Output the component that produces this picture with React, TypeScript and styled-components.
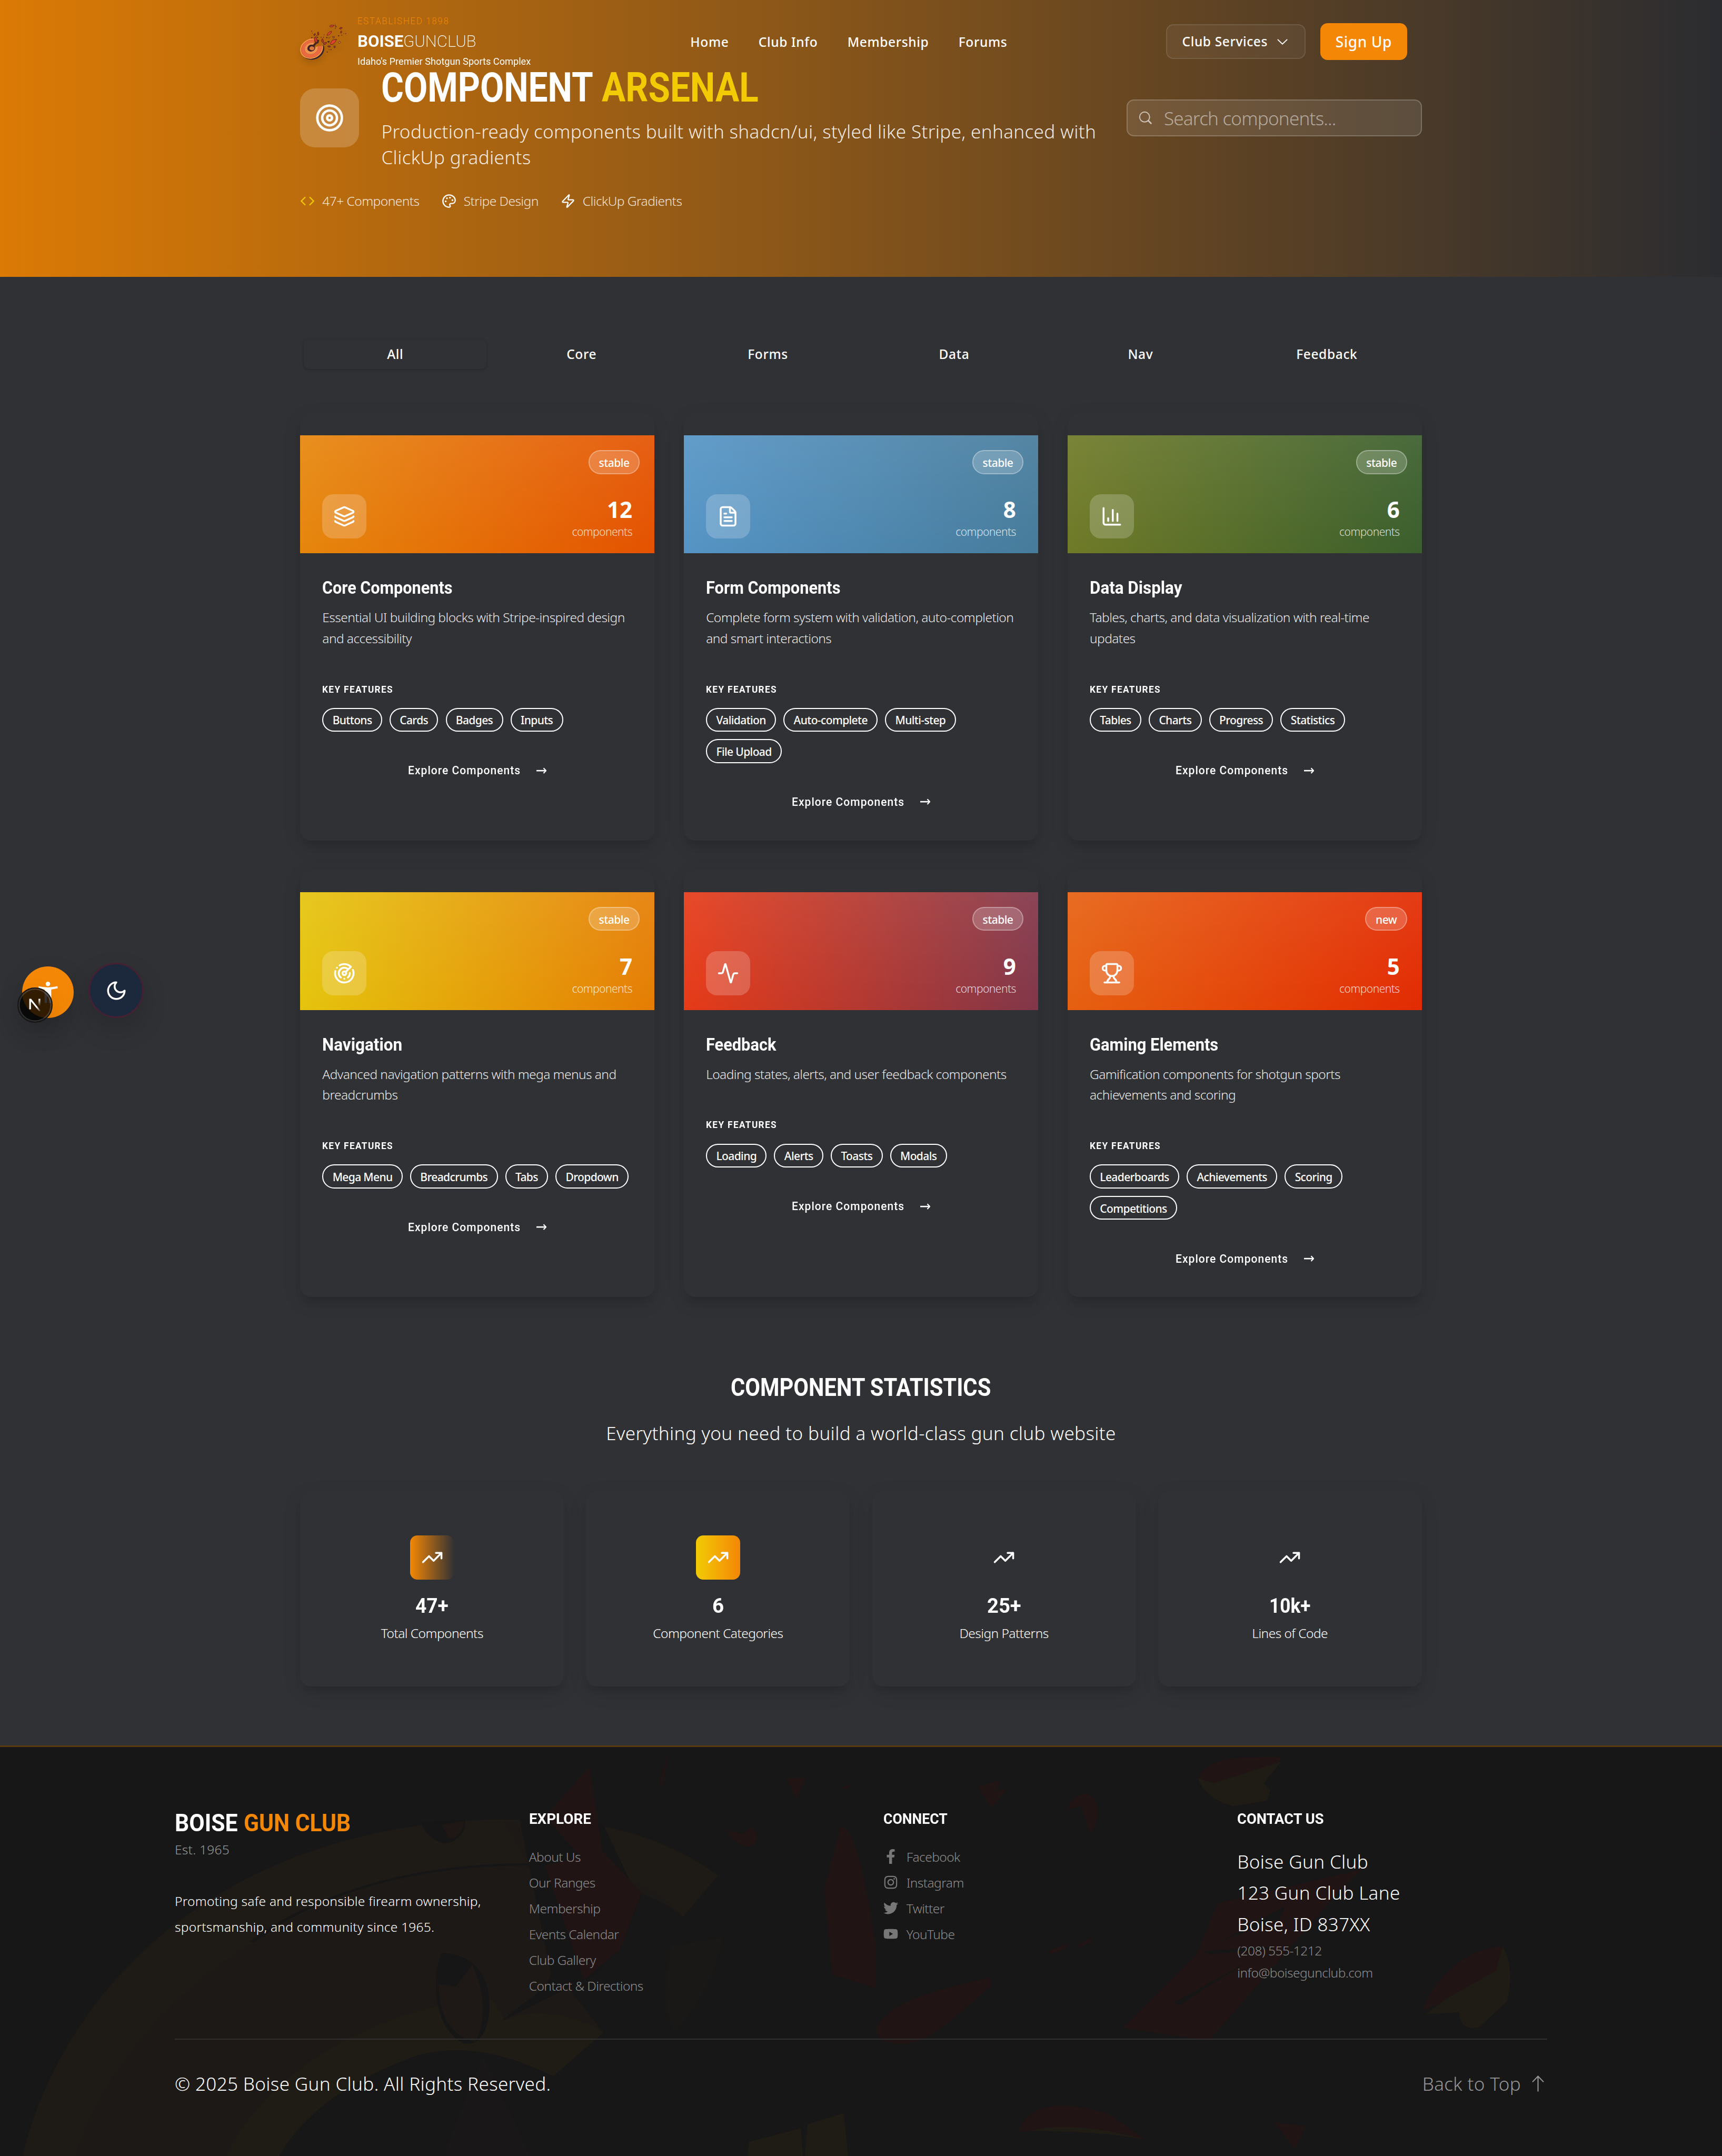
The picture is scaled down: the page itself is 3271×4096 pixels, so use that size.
import React, { useLayoutEffect, useRef, useState } from "react";
import styled, { createGlobalStyle } from "styled-components";
import {
  Activity,
  ChartColumn,
  Code,
  FileText,
  Layers,
  Palette,
  Radar,
  Target,
  TrendingUp,
  Trophy,
  Zap,
} from "lucide-react";
import { FaFacebookF, FaInstagram, FaTwitter, FaYoutube } from "react-icons/fa";

/* Design pixels to rem: the root font size carries the page scale. */
const u = (n: number) => `${n / 16}rem`;

const color = {
  page: "#303135",
  footer: "#171717",
  orange: "#f48705",
  yellow: "#f2cb05",
  muted: "#8c8c8c",
};

const Global = createGlobalStyle`
  html { font-size: 28.032px; }
  *, *::before, *::after { box-sizing: border-box; }
  body {
    margin: 0;
    background: ${color.page};
    color: #fff;
    font-family: "Noto Sans", "Open Sans", sans-serif;
    font-weight: 300;
    -webkit-font-smoothing: antialiased;
  }
  h1, h2, h3, h4, p, ul { margin: 0; padding: 0; }
  ul { list-style: none; }
  button { border: 0; background: none; color: inherit; font: inherit; padding: 0; }
  a { color: inherit; text-decoration: none; }
  svg { display: block; flex: none; }
`;

/* ---------- Condensed display text ---------- */

const FitBox = styled.span<{ $w: number }>`
  display: inline-block;
  width: ${(p) => u(p.$w)};
  vertical-align: top;
  white-space: nowrap;
`;
const FitInner = styled.span`
  display: inline-block;
  transform-origin: 0 50%;
`;

/* Squeezes its text to exactly the given width. */
function Fit({ w, children }: { w: number; children: React.ReactNode }) {
  const ref = useRef<HTMLSpanElement>(null);
  const [k, setK] = useState(1);
  useLayoutEffect(() => {
    const el = ref.current;
    if (!el || !el.parentElement) return;
    const natural = el.offsetWidth;
    if (natural) setK(el.parentElement.getBoundingClientRect().width / natural);
  }, [w]);
  return (
    <FitBox $w={w}>
      <FitInner ref={ref} style={{ transform: `scaleX(${k})` }}>
        {children}
      </FitInner>
    </FitBox>
  );
}

/* ---------- Page ---------- */

const Page = styled.div`
  position: relative;
  width: 100%;
  height: 4096px;
  overflow: hidden;
  display: flex;
  flex-direction: column;
`;

/* ---------- Navigation ---------- */

const NavBar = styled.header`
  position: absolute;
  inset: 0 0 auto 0;
  z-index: 5;
  height: ${u(90)};
  padding: 0 ${u(341.5)} 0 ${u(325.5)};
  display: grid;
  grid-template-columns: ${u(423)} 1fr auto;
  align-items: center;
`;
const Brand = styled.div`
  display: flex;
  align-items: center;
  gap: ${u(12)};
`;
const BrandText = styled.div`
  display: flex;
  flex-direction: column;
  font-family: Roboto, sans-serif;
`;
const Established = styled.span`
  font-size: ${u(10.8)};
  line-height: ${u(16)};
  letter-spacing: 0.1em;
  font-weight: 300;
  color: ${color.orange};
`;
const BrandName = styled.span`
  font-size: ${u(18.3)};
  line-height: ${u(28)};
  font-weight: 200;
  b { font-weight: 700; }
`;
const Tagline = styled.span`
  font-size: ${u(10.9)};
  line-height: ${u(16)};
  font-weight: 400;
`;
const NavLinks = styled.nav`
  display: flex;
  gap: ${u(32.2)};
  font-size: ${u(14)};
  font-weight: 500;
  letter-spacing: 0.025em;
  line-height: ${u(20)};
  padding-top: ${u(0.6)};
`;
const NavActions = styled.div`
  display: flex;
  align-items: center;
  gap: ${u(16)};
`;
const ServicesButton = styled.button`
  height: ${u(38)};
  width: ${u(151)};
  padding: 0 ${u(16)};
  display: flex;
  align-items: center;
  justify-content: space-between;
  border: 2px solid rgba(255, 255, 255, 0.1);
  border-radius: ${u(8)};
  background: rgba(255, 255, 255, 0.05);
  font-size: ${u(14)};
  font-weight: 500;
  letter-spacing: 0.025em;
  svg { width: ${u(16)}; height: ${u(16)}; }
`;
const SignUpButton = styled.button`
  height: ${u(40)};
  width: ${u(94)};
  border-radius: ${u(8)};
  background: ${color.orange};
  font-size: ${u(16)};
  font-weight: 500;
  letter-spacing: 0.02em;
`;
const LogoSvg = styled.svg`
  width: ${u(50)};
  height: ${u(40)};
  overflow: visible;
  filter: drop-shadow(0 ${u(4)} ${u(3)} rgba(0, 0, 0, 0.12));
`;

/* ---------- Hero ---------- */

const Hero = styled.section`
  flex: none;
  height: ${u(300)};
  padding: ${u(72)} ${u(325.5)} 0;
  background: linear-gradient(to right, #db7a05, #2b2c30);
`;
const HeroRow = styled.div`
  display: flex;
  align-items: center;
`;
const HeroIcon = styled.div`
  flex: none;
  width: ${u(64)};
  height: ${u(64)};
  margin-right: ${u(24)};
  display: grid;
  place-items: center;
  border-radius: ${u(16)};
  background: rgba(255, 255, 255, 0.2);
  svg { width: ${u(32)}; height: ${u(32)}; }
`;
const HeroText = styled.div`
  flex: 1;
`;
const HeroTitle = styled.h1`
  margin-bottom: ${u(8.6)};
  height: ${u(47.4)};
  font: 700 ${u(43.9)} / ${u(47)} Roboto, sans-serif;
  white-space: nowrap;
`;
const Gold = styled.span`
  margin-left: ${u(9)};
  color: ${color.yellow};
`;
const HeroLead = styled.p`
  height: ${u(56)};
  padding-top: ${u(0.6)};
  font-size: ${u(20)};
  line-height: ${u(28)};
  letter-spacing: 0.01em;
  white-space: nowrap;
  color: rgba(255, 255, 255, 0.9);
`;
const SearchField = styled.label`
  flex: none;
  width: ${u(320)};
  height: ${u(40)};
  padding-left: ${u(11.3)};
  display: flex;
  align-items: center;
  gap: ${u(12)};
  border: 2px solid rgba(255, 255, 255, 0.2);
  border-radius: ${u(8)};
  background: rgba(255, 255, 255, 0.1);
  color: rgba(255, 255, 255, 0.5);
  font-size: ${u(20)};
  line-height: ${u(28)};
  letter-spacing: -0.0225em;
  svg { width: ${u(16)}; height: ${u(16)}; color: rgba(255, 255, 255, 0.65); }
`;
const Facts = styled.ul`
  margin-top: ${u(24)};
  display: flex;
  gap: ${u(24)};
`;
const Fact = styled.li<{ $icon?: string }>`
  display: flex;
  align-items: center;
  gap: ${u(8)};
  font-size: ${u(14)};
  line-height: ${u(20)};
  letter-spacing: -0.022em;
  color: rgba(255, 255, 255, 0.85);
  svg { width: ${u(16)}; height: ${u(16)}; color: ${(p) => p.$icon || "#fff"}; }
`;

/* ---------- Tabs ---------- */

const Main = styled.main`
  flex: none;
  padding: ${u(64)} ${u(325.5)};
`;
const TabList = styled.div`
  height: ${u(40)};
  padding: ${u(4)};
  display: grid;
  grid-template-columns: repeat(6, 1fr);
  gap: ${u(4)};
  margin-bottom: ${u(44)};
`;
const Tab = styled.button<{ $active: boolean }>`
  border-radius: ${u(6)};
  font-size: ${u(14)};
  line-height: ${u(20)};
  font-weight: 500;
  letter-spacing: 0.025em;
  box-shadow: ${(p) => (p.$active ? `0 ${u(1)} ${u(3)} rgba(0,0,0,.2)` : "none")};
`;

/* ---------- Category cards ---------- */

const cardShadow = `0 ${u(8)} ${u(10)} ${u(-4)} rgba(0,0,0,.12), 0 ${u(6)} ${u(22)} rgba(0,0,0,.08)`;

const CardGrid = styled.div`
  display: grid;
  grid-template-columns: repeat(3, 1fr);
  gap: ${u(32)};
`;
const Card = styled.article`
  height: ${u(463.3)};
  padding-top: ${u(24)};
  border-radius: ${u(12)};
  background: ${color.page};
  box-shadow: ${cardShadow};
`;
const Banner = styled.div<{ $from: string; $to: string }>`
  height: ${u(128)};
  padding: ${u(16)} ${u(16)} ${u(16)} ${u(24)};
  display: grid;
  grid-template-columns: ${u(48)} 1fr;
  grid-template-rows: ${u(26)} 1fr;
  background:
    linear-gradient(to bottom, rgba(255, 255, 255, 0.08), rgba(255, 255, 255, 0)),
    linear-gradient(to right, ${(p) => p.$from}, ${(p) => p.$to});
`;
const Status = styled.span`
  grid-column: 2;
  justify-self: end;
  height: ${u(26)};
  padding: ${u(1.2)} ${u(10)} 0;
  display: flex;
  align-items: center;
  border: 2px solid rgba(255, 255, 255, 0.3);
  border-radius: ${u(13)};
  background: rgba(255, 255, 255, 0.2);
  font-size: ${u(12)};
  line-height: ${u(16)};
  font-weight: 500;
  letter-spacing: -0.025em;
`;
const IconTile = styled.span`
  align-self: end;
  width: ${u(48)};
  height: ${u(48)};
  display: grid;
  place-items: center;
  border-radius: ${u(12)};
  background: rgba(255, 255, 255, 0.2);
  svg { width: ${u(24)}; height: ${u(24)}; }
`;
const Count = styled.div`
  align-self: end;
  height: ${u(47.3)};
  padding-right: ${u(8)};
  text-align: right;
`;
const CountNumber = styled.div`
  font-size: ${u(24)};
  line-height: ${u(32)};
  font-weight: 700;
`;
const CountLabel = styled.div`
  font-size: ${u(12)};
  line-height: ${u(16)};
  letter-spacing: -0.025em;
  color: rgba(255, 255, 255, 0.8);
`;
const CardBody = styled.div`
  padding: ${u(24)};
  display: flex;
  flex-direction: column;
`;
const CardTitle = styled.h3`
  font: 700 ${u(18.6)} / ${u(28)} Roboto, sans-serif;
`;
const CardText = styled.p`
  margin-top: ${u(6)};
  font-size: ${u(14)};
  line-height: ${u(22.75)};
  letter-spacing: -0.023em;
  white-space: nowrap;
  color: rgba(255, 255, 255, 0.92);
`;
const FeatureTitle = styled.h4`
  margin-top: ${u(36)};
  font: 700 ${u(11)} / ${u(16)} Roboto, sans-serif;
  letter-spacing: 0.08em;
`;
const Chips = styled.ul`
  margin-top: ${u(12)};
  display: flex;
  flex-wrap: wrap;
  gap: ${u(8)};
`;
const Chip = styled.li`
  height: ${u(26)};
  padding: ${u(1.2)} ${u(9.9)} 0;
  display: flex;
  align-items: center;
  border: 2px solid #fff;
  border-radius: ${u(13)};
  font-size: ${u(12)};
  line-height: ${u(16)};
  font-weight: 500;
  letter-spacing: -0.03em;
  white-space: nowrap;
`;
const ExploreButton = styled.button`
  margin-top: ${u(24)};
  height: ${u(36)};
  display: flex;
  align-items: center;
  justify-content: center;
  gap: ${u(17)};
  font: 500 ${u(12.8)} / ${u(20)} Roboto, sans-serif;
  letter-spacing: 0.05em;
  svg { width: ${u(11)}; height: ${u(7)}; }
`;

/* ---------- Statistics ---------- */

const StatsHeading = styled.h2`
  margin-top: ${u(80)};
  font: 700 ${u(27.4)} / ${u(36)} Roboto, sans-serif;
  text-align: center;
`;
const StatsLead = styled.p`
  margin: ${u(17.3)} 0 ${u(49.2)};
  font-size: ${u(20)};
  line-height: ${u(28)};
  letter-spacing: 0.01em;
  text-align: center;
`;
const StatGrid = styled.div`
  display: grid;
  grid-template-columns: repeat(4, 1fr);
  gap: ${u(24)};
`;
const StatCard = styled.div`
  height: ${u(211.7)};
  padding-top: ${u(48)};
  display: flex;
  flex-direction: column;
  align-items: center;
  border-radius: ${u(12)};
  background: ${color.page};
  box-shadow: ${cardShadow};
`;
const StatIcon = styled.div<{ $bg: string }>`
  width: ${u(48)};
  height: ${u(48)};
  margin-bottom: ${u(12.2)};
  display: grid;
  place-items: center;
  border-radius: ${u(8)};
  background: ${(p) => p.$bg};
  svg { width: ${u(24)}; height: ${u(24)}; }
`;
const StatValue = styled.div`
  margin-bottom: ${u(3.5)};
  font: 700 ${u(22.2)} / ${u(32)} Roboto, sans-serif;
`;
const StatLabel = styled.div`
  font-size: ${u(14)};
  line-height: ${u(20)};
  letter-spacing: -0.022em;
`;

/* ---------- Footer ---------- */

const Footer = styled.footer`
  position: relative;
  flex: 1;
  overflow: hidden;
  padding: ${u(64)} ${u(189.5)} 0;
  border-top: 3px solid #59390f;
  background: ${color.footer};
`;
const FooterArt = styled.svg`
  position: absolute;
  inset: 0;
  width: 100%;
  height: 100%;
`;
const FooterGrid = styled.div`
  position: relative;
  height: ${u(253.4)};
  display: grid;
  grid-template-columns: repeat(4, 1fr);
  gap: ${u(48)};
  align-items: start;
  border-bottom: 2px solid #303030;
`;
const FooterBrand = styled.h2`
  font: 700 ${u(26.8)} / ${u(36)} Roboto, sans-serif;
`;
const OrangeText = styled.span`
  margin-left: ${u(6.5)};
  color: ${color.orange};
`;
const Since = styled.p`
  margin-top: ${u(0.8)};
  font-size: ${u(14)};
  line-height: ${u(20)};
  letter-spacing: 0.01em;
  color: #9a9a9a;
`;
const Mission = styled.p`
  margin-top: ${u(32)};
  font-size: ${u(14)};
  line-height: ${u(28)};
  letter-spacing: 0.01em;
  white-space: nowrap;
`;
const FooterTitle = styled.h3`
  margin-bottom: ${u(16.8)};
  font: 700 ${u(16.2)} / ${u(28)} Roboto, sans-serif;
`;
const LinkList = styled.ul`
  display: flex;
  flex-direction: column;
  gap: ${u(8)};
`;
const LinkItem = styled.li`
  display: flex;
  align-items: center;
  gap: ${u(9.2)};
  font-size: ${u(14)};
  line-height: ${u(20)};
  letter-spacing: -0.023em;
  color: ${color.muted};
  svg { width: ${u(16)}; height: ${u(16)}; color: #777; }
`;
const Address = styled.p`
  margin-top: ${u(-1.8)};
  font-size: ${u(20)};
  line-height: ${u(34)};
  letter-spacing: 0.01em;
`;
const ContactLine = styled.p`
  font-size: ${u(14)};
  line-height: ${u(24)};
  letter-spacing: -0.022em;
  color: ${color.muted};
`;
const FooterBottom = styled.div`
  position: relative;
  padding-top: ${u(32.8)};
  display: flex;
  justify-content: space-between;
  font-size: ${u(20)};
  line-height: ${u(30)};
  letter-spacing: 0.01em;
`;
const BackToTop = styled.a`
  display: flex;
  align-items: center;
  gap: ${u(8.5)};
  color: #959595;
  svg { width: ${u(20)}; height: ${u(20)}; }
`;

/* ---------- Floating controls ---------- */

const Floating = styled.div<{ $x: number; $y: number; $d: number }>`
  position: absolute;
  z-index: 6;
  left: ${(p) => u(p.$x)};
  top: ${(p) => u(p.$y)};
  width: ${(p) => u(p.$d)};
  height: ${(p) => u(p.$d)};
  border-radius: 50%;
  display: grid;
  place-items: center;
`;
const AccessButton = styled(Floating)`
  background: ${color.orange};
  box-shadow: 0 ${u(12)} ${u(28)} rgba(0, 0, 0, 0.15);
  svg { width: ${u(24)}; height: ${u(28)}; }
`;
const ThemeButton = styled(Floating)`
  background: #1c293d;
  border: 3.5px solid #452033;
  box-shadow: 0 ${u(12)} ${u(28)} rgba(0, 0, 0, 0.15);
  svg { width: ${u(24)}; height: ${u(24)}; }
`;
const DevBadge = styled(Floating)`
  background: rgba(0, 0, 0, 0.8);
  border: 2px solid #171717;
  box-shadow: inset 0 0 0 2.5px rgba(255, 255, 255, 0.16), 0 ${u(12)} ${u(28)} rgba(0, 0, 0, 0.12);
  svg { width: ${u(13)}; height: ${u(14)}; }
`;

/* ---------- Drawings ---------- */

const shards: [string, string][] = [
  ["M225 109L235 103L256 104L247 113L230 115Z", "#e2432c"],
  ["M208 165L220 150L237 142L236 153L222 165L210 170Z", "#e8472f"],
  ["M229 222L244 200L271 195L262 212L246 227L233 229Z", "#e2432c"],
  ["M288 125L297 117L308 120L300 129Z", "#b5382b"],
  ["M295 152L300 140L306 146L300 156Z", "#c23a2b"],
  ["M174 195L180 190L187 212L182 218L174 210Z", "#c23a2b"],
  ["M184 223L196 215L208 217L198 228L186 229Z", "#b5382b"],
  ["M124 186L134 178L146 205L142 217L130 210Z", "#c93c2c"],
  ["M146 152L152 147L155 165L148 170Z", "#a43329"],
  ["M121 165L130 157L134 163L126 172Z", "#a43329"],
  ["M212 240L225 237L232 243L220 247Z", "#a43329"],
  ["M252 241L260 238L263 247L256 251Z", "#c23a2b"],
  ["M243 178L256 177L256 184L247 185Z", "#e98a3c"],
  ["M282 214L292 208L297 215L287 223Z", "#ee8a4a"],
  ["M211 209L224 207L220 217Z", "#4a2520"],
];
const specks: [number, number, number][] = [
  [109, 142, 3], [113, 155, 2.5], [110, 185, 4], [140, 172, 3], [146, 182, 4], [170, 182, 3],
  [186, 182, 3], [190, 166, 2.5], [207, 184, 4], [222, 186, 3], [230, 180, 2], [262, 103, 3],
  [266, 112, 4], [262, 123, 3], [260, 92, 1.5], [284, 172, 4], [304, 168, 3], [317, 158, 2.5],
  [330, 158, 3], [234, 262, 3.5], [210, 278, 3.5], [222, 262, 2.5], [252, 188, 2], [216, 232, 2],
];

function Logo() {
  return (
    <LogoSvg viewBox="33 90 300 240">
      <ellipse cx="116" cy="262" rx="76" ry="64" transform="rotate(-22 116 262)" fill="#34222c" />
      <ellipse cx="108" cy="256" rx="76" ry="64" transform="rotate(-22 108 256)" fill="#f79b4b" />
      <ellipse cx="107" cy="256" rx="68" ry="56" transform="rotate(-22 107 256)" fill="#ec6a3f" />
      <ellipse cx="108" cy="256" rx="68" ry="56" transform="rotate(-22 108 256)" fill="none" stroke="#b8502f" strokeWidth="2" />
      <ellipse cx="106" cy="254" rx="45" ry="38" transform="rotate(-22 106 254)" fill="#f0934e" stroke="#c05c33" strokeWidth="2" />
      <ellipse cx="106" cy="252" rx="26" ry="22" transform="rotate(-22 106 252)" fill="#3b2027" />
      <ellipse cx="110" cy="254" rx="16" ry="13" fill="#d97a3f" />
      <path d="M128 190L158 196L190 232L178 238L150 240L126 248L134 224L122 214Z" fill="#b8690d" />
      <path d="M132 196L158 200L152 220L140 224L128 240L116 246L120 226L132 216Z" fill="#4a2520" />
      {shards.map(([d, fill]) => (
        <path key={d} d={d} fill={fill} stroke="#4a1f1c" strokeWidth="3" />
      ))}
      {specks.map(([x, y, r]) => (
        <circle key={`${x}-${y}`} cx={x} cy={y} r={r} fill="#5a2218" />
      ))}
    </LogoSvg>
  );
}

function FooterArtwork() {
  const tan = "#1f1b15";
  const red = "#201514";
  const dark = "#161616";
  return (
    <FooterArt viewBox="0 0 3734 886" preserveAspectRatio="none">
      <g transform="scale(1.2117 .5842) translate(0 -51)">
        <path d="M40 1568C120 900 420 330 900 320C1080 320 1200 420 1285 527L1222 682C1200 640 1130 540 1050 600L1000 900L1080 1110L990 1272C880 1160 800 1160 740 1200C620 1290 540 1420 500 1568Z" fill="#1d1917" />
        <path d="M40 1568C120 900 420 330 900 320L945 484C560 470 220 1000 135 1568Z" fill="#1e1b16" />
        <path d="M1080 345C1180 390 1240 460 1285 527L1222 682C1200 620 1160 570 1127 545Z" fill="#1e1b16" />
        <path d="M450 775C560 600 740 480 955 487" fill="none" stroke={dark} strokeWidth="8" />
        <path d="M405 1568C480 1230 700 1000 880 985L905 1065C950 1010 1040 1050 1080 1110L990 1272C880 1160 800 1160 740 1200C620 1290 540 1420 500 1568Z" fill={tan} />
        <path d="M930 320L1080 340L1130 560L1148 600L1110 800L1060 900L900 1065C930 1000 990 950 985 880Z" fill={dark} />
        <path d="M1055 125L1078 440L1045 470L975 310Z" fill={red} />
        <path d="M975 490L1080 440L1148 590L1110 800L1045 915Z" fill={red} />
        <path d="M790 815C850 820 880 900 875 1040C870 1130 850 1160 830 1150C790 1110 775 1000 782 870Z" fill={dark} />
        <path d="M785 930L815 940L845 860C870 960 870 1080 850 1145C810 1120 785 1060 785 930Z" fill="#1e1916" />
        <path d="M755 330L832 322C835 380 810 410 795 408C775 400 755 360 755 330Z" fill={dark} />
        <path d="M790 340L830 325C830 370 815 390 805 392Z" fill="#1e1716" />
        <path d="M1200 790L1295 755C1280 900 1240 1050 1205 1105C1185 1030 1190 900 1200 790Z" fill="#191816" />
        <path d="M1408 166H1442L1425 245Z M1302 360L1330 375L1345 345C1362 380 1355 420 1338 420C1320 410 1306 390 1302 360Z" fill={red} />
        <path d="M1505 342C1530 360 1545 500 1568 800V945L1490 895L1475 580Z" fill={red} />
        <path d="M1340 1515L1433 1465L1437 1568H1338Z M1445 1450L1510 1408L1518 1568H1440Z" fill={tan} />
        <path d="M1180 180L1198 65L1185 200Z M1500 207L1523 187L1518 205Z" fill={red} />
        <path d="M808 1482L865 1200L950 1568H795Z" fill="#191717" />
      </g>
      <g transform="translate(1850 0) scale(1.2015 .5842) translate(0 -51)">
        <path d="M0 405L42 945L0 920Z" fill={red} />
        <path d="M622 165C640 90 690 86 773 88L765 125L650 185Z" fill={red} />
        <path d="M622 165L650 185L773 105L741 185L753 210L747 250L686 271C650 250 628 210 622 165Z" fill={tan} />
        <path d="M225 197L265 175L258 215L278 205L250 277Z M387 280C395 220 435 200 440 270C442 330 435 370 427 365L412 270Z" fill={red} />
        <path d="M918 505L875 590L642 1140L487 1093L620 820L658 630Z" fill={red} />
        <path d="M665 770L780 640L770 690L690 750Z M578 1000L710 850L640 940L590 1008Z M632 808L760 790L756 800L640 820Z" fill={dark} />
        <path d="M248 905V940C210 1000 170 1090 120 1140C80 1165 40 1150 42 1095C60 1000 150 950 248 905Z" fill={red} />
        <path d="M1172 790L1160 880L1070 990L1027 1030C1050 910 1100 800 1172 790Z" fill={red} />
        <path d="M1172 790C1190 850 1188 930 1180 995L1130 1090C1110 1100 1096 1090 1093 1035L1033 1042L1070 985L1160 880Z" fill={tan} />
        <path d="M298 1478C320 1370 370 1360 460 1410L528 1508C440 1465 360 1470 298 1478Z" fill={red} />
        <path d="M320 1475C360 1450 440 1455 528 1508C460 1480 370 1475 320 1475Z" fill={tan} />
        <path d="M760 1443L817 1457L797 1542Z M352 810L382 780L388 795L360 818Z M402 790L432 755L430 775L408 795Z" fill={red} />
      </g>
    </FooterArt>
  );
}

const ChevronIcon = () => (
  <svg viewBox="0 0 15 15" fill="none" stroke="currentColor" strokeWidth="1">
    <path d="M2.6 5.3L7.5 10L12.4 5.3" />
  </svg>
);
const SearchIcon = () => (
  <svg viewBox="0 0 16 16" fill="none" stroke="currentColor" strokeWidth="1.1">
    <circle cx="7" cy="7" r="5.4" />
    <path d="M11 11L14.4 14.4" strokeWidth="1.5" />
  </svg>
);
const ArrowIcon = () => (
  <svg viewBox="0 0 11 7" fill="none" stroke="currentColor" strokeWidth="1.5">
    <path d="M0 3.5H10" />
    <path d="M7.7 0.7L10.3 3.5L7.7 6.3" strokeWidth="1.2" />
  </svg>
);
const UpIcon = () => (
  <svg viewBox="0 0 20 20" fill="none" stroke="currentColor" strokeWidth="1.2">
    <path d="M10 18.5V2.2M4 8.2L10 2L16 8.2" />
  </svg>
);
const PersonIcon = () => (
  <svg viewBox="0 0 24 28">
    <circle cx="12" cy="4.7" r="2.4" fill="#fff" />
    <path d="M1.8 7.2C8 8.8 16 8.8 22.3 7.2L22.6 9.4L15.6 10.8V25.4H13V18H11V25.4H8.4V10.8L1.6 9.4Z" fill="#fff" />
  </svg>
);
const MoonIcon = () => (
  <svg viewBox="0 0 24 24" fill="none" stroke="#fff" strokeWidth="2" strokeLinejoin="round">
    <path d="M12 3a6 6 0 0 0 9 9 9 9 0 1 1-9-9Z" />
  </svg>
);
const NextMark = () => (
  <svg viewBox="0 0 78 84" fill="none">
    <defs>
      <linearGradient id="stem" x1="0" y1="0" x2="0" y2="1">
        <stop offset="0" stopColor="#fff" />
        <stop offset="1" stopColor="#fff" stopOpacity="0" />
      </linearGradient>
      <linearGradient id="diag" gradientUnits="userSpaceOnUse" x1="50" y1="56" x2="74" y2="86">
        <stop offset="0" stopColor="#fff" />
        <stop offset="1" stopColor="#fff" stopOpacity="0" />
      </linearGradient>
    </defs>
    <path d="M2 70V2H14L76 80L67 84L13 19V70Z" fill="url(#diag)" />
    <rect x="62" y="2" width="12" height="46" fill="url(#stem)" />
  </svg>
);

/* ---------- Data ---------- */

const tabs = ["All", "Core", "Forms", "Data", "Nav", "Feedback"];

const cards = [
  {
    title: "Core Components", titleW: 141.5, count: 12, status: "stable", Icon: Layers,
    from: "#e6860c", to: "#e45200",
    text: ["Essential UI building blocks with Stripe-inspired design", "and accessibility"],
    chips: ["Buttons", "Cards", "Badges", "Inputs"],
  },
  {
    title: "Form Components", titleW: 146, count: 8, status: "stable", Icon: FileText,
    from: "#5594c5", to: "#467b9b",
    text: ["Complete form system with validation, auto-completion", "and smart interactions"],
    chips: ["Validation", "Auto-complete", "Multi-step", "File Upload"],
  },
  {
    title: "Data Display", titleW: 100, count: 6, status: "stable", Icon: ChartColumn,
    from: "#6f7a27", to: "#3a5e2c",
    text: ["Tables, charts, and data visualization with real-time", "updates"],
    chips: ["Tables", "Charts", "Progress", "Statistics"],
  },
  {
    title: "Navigation", titleW: 87, count: 7, status: "stable", Icon: Radar,
    from: "#e5c40d", to: "#e57d03",
    text: ["Advanced navigation patterns with mega menus and", "breadcrumbs"],
    chips: ["Mega Menu", "Breadcrumbs", "Tabs", "Dropdown"],
  },
  {
    title: "Feedback", titleW: 76, count: 9, status: "stable", Icon: Activity,
    from: "#e63a17", to: "#813649",
    text: ["Loading states, alerts, and user feedback components"],
    chips: ["Loading", "Alerts", "Toasts", "Modals"],
  },
  {
    title: "Gaming Elements", titleW: 139.5, count: 5, status: "new", Icon: Trophy,
    from: "#e66010", to: "#e22b02",
    text: ["Gamification components for shotgun sports", "achievements and scoring"],
    chips: ["Leaderboards", "Achievements", "Scoring", "Competitions"],
  },
];

const stats = [
  { value: "47+", w: 36, label: "Total Components", bg: "linear-gradient(to right, #f48705, #303135)" },
  { value: "6", w: 12.5, label: "Component Categories", bg: "linear-gradient(to right, #f2cb05, #f48705)" },
  { value: "25+", w: 37, label: "Design Patterns", bg: "none" },
  { value: "10k+", w: 45, label: "Lines of Code", bg: "none" },
];

const explore = ["About Us", "Our Ranges", "Membership", "Events Calendar", "Club Gallery", "Contact & Directions"];

const social = [
  { name: "Facebook", Icon: FaFacebookF },
  { name: "Instagram", Icon: FaInstagram },
  { name: "Twitter", Icon: FaTwitter },
  { name: "YouTube", Icon: FaYoutube },
];

export default function App() {
  return (
    <Page>
      <Global />

      <NavBar>
        <Brand>
          <Logo />
          <BrandText>
            <Established><Fit w={100}>ESTABLISHED 1898</Fit></Established>
            <BrandName>
              <Fit w={50}><b>BOISE</b></Fit>
              <Fit w={79}>GUNCLUB</Fit>
            </BrandName>
            <Tagline><Fit w={188}>Idaho's Premier Shotgun Sports Complex</Fit></Tagline>
          </BrandText>
        </Brand>
        <NavLinks>
          <a>Home</a>
          <a>Club Info</a>
          <a>Membership</a>
          <a>Forums</a>
        </NavLinks>
        <NavActions>
          <ServicesButton>Club Services <ChevronIcon /></ServicesButton>
          <SignUpButton>Sign Up</SignUpButton>
        </NavActions>
      </NavBar>

      <Hero>
        <HeroRow>
          <HeroIcon><Target /></HeroIcon>
          <HeroText>
            <HeroTitle>
              <Fit w={230}>COMPONENT</Fit>
              <Gold><Fit w={170}>ARSENAL</Fit></Gold>
            </HeroTitle>
            <HeroLead>
              Production-ready components built with shadcn/ui, styled like Stripe, enhanced with
              <br />
              ClickUp gradients
            </HeroLead>
          </HeroText>
          <SearchField><SearchIcon />Search components...</SearchField>
        </HeroRow>
        <Facts>
          <Fact $icon={color.yellow}><Code />47+ Components</Fact>
          <Fact><Palette />Stripe Design</Fact>
          <Fact><Zap />ClickUp Gradients</Fact>
        </Facts>
      </Hero>

      <Main>
        <TabList>
          {tabs.map((t, i) => (
            <Tab key={t} $active={i === 0}>{t}</Tab>
          ))}
        </TabList>

        <CardGrid>
          {cards.map(({ title, titleW, count, status, Icon, from, to, text, chips }) => (
            <Card key={title}>
              <Banner $from={from} $to={to}>
                <Status>{status}</Status>
                <IconTile><Icon /></IconTile>
                <Count>
                  <CountNumber>{count}</CountNumber>
                  <CountLabel>components</CountLabel>
                </Count>
              </Banner>
              <CardBody>
                <CardTitle><Fit w={titleW}>{title}</Fit></CardTitle>
                <CardText>
                  {text.map((line, i) => (
                    <React.Fragment key={line}>
                      {i > 0 && <br />}
                      {line}
                    </React.Fragment>
                  ))}
                </CardText>
                <FeatureTitle><Fit w={77}>KEY FEATURES</Fit></FeatureTitle>
                <Chips>
                  {chips.map((c) => (
                    <Chip key={c}>{c}</Chip>
                  ))}
                </Chips>
                <ExploreButton><Fit w={122.5}>Explore Components</Fit> <ArrowIcon /></ExploreButton>
              </CardBody>
            </Card>
          ))}
        </CardGrid>

        <StatsHeading><Fit w={282}>COMPONENT STATISTICS</Fit></StatsHeading>
        <StatsLead>Everything you need to build a world-class gun club website</StatsLead>
        <StatGrid>
          {stats.map((s) => (
            <StatCard key={s.label}>
              <StatIcon $bg={s.bg}><TrendingUp /></StatIcon>
              <StatValue><Fit w={s.w}>{s.value}</Fit></StatValue>
              <StatLabel>{s.label}</StatLabel>
            </StatCard>
          ))}
        </StatGrid>
      </Main>

      <Footer>
        <FooterArtwork />
        <FooterGrid>
          <div>
            <FooterBrand>
              <Fit w={68}>BOISE</Fit>
              <OrangeText><Fit w={116}>GUN CLUB</Fit></OrangeText>
            </FooterBrand>
            <Since>Est. 1965</Since>
            <Mission>
              Promoting safe and responsible firearm ownership,
              <br />
              sportsmanship, and community since 1965.
            </Mission>
          </div>
          <div>
            <FooterTitle><Fit w={67}>EXPLORE</Fit></FooterTitle>
            <LinkList>
              {explore.map((l) => (
                <LinkItem key={l}>{l}</LinkItem>
              ))}
            </LinkList>
          </div>
          <div>
            <FooterTitle><Fit w={69.5}>CONNECT</Fit></FooterTitle>
            <LinkList>
              {social.map(({ name, Icon }) => (
                <LinkItem key={name}><Icon />{name}</LinkItem>
              ))}
            </LinkList>
          </div>
          <div>
            <FooterTitle><Fit w={94}>CONTACT US</Fit></FooterTitle>
            <Address>
              Boise Gun Club
              <br />
              123 Gun Club Lane
              <br />
              Boise, ID 837XX
            </Address>
            <ContactLine>(208) 555-1212</ContactLine>
            <ContactLine>info@boisegunclub.com</ContactLine>
          </div>
        </FooterGrid>
        <FooterBottom>
          <span>© 2025 Boise Gun Club. All Rights Reserved.</span>
          <BackToTop>Back to Top <UpIcon /></BackToTop>
        </FooterBottom>
      </Footer>

      <AccessButton $x={24} $y={1048} $d={56}><PersonIcon /></AccessButton>
      <ThemeButton $x={96} $y={1044} $d={60}><MoonIcon /></ThemeButton>
      <DevBadge $x={19} $y={1071} $d={38}><NextMark /></DevBadge>
    </Page>
  );
}
